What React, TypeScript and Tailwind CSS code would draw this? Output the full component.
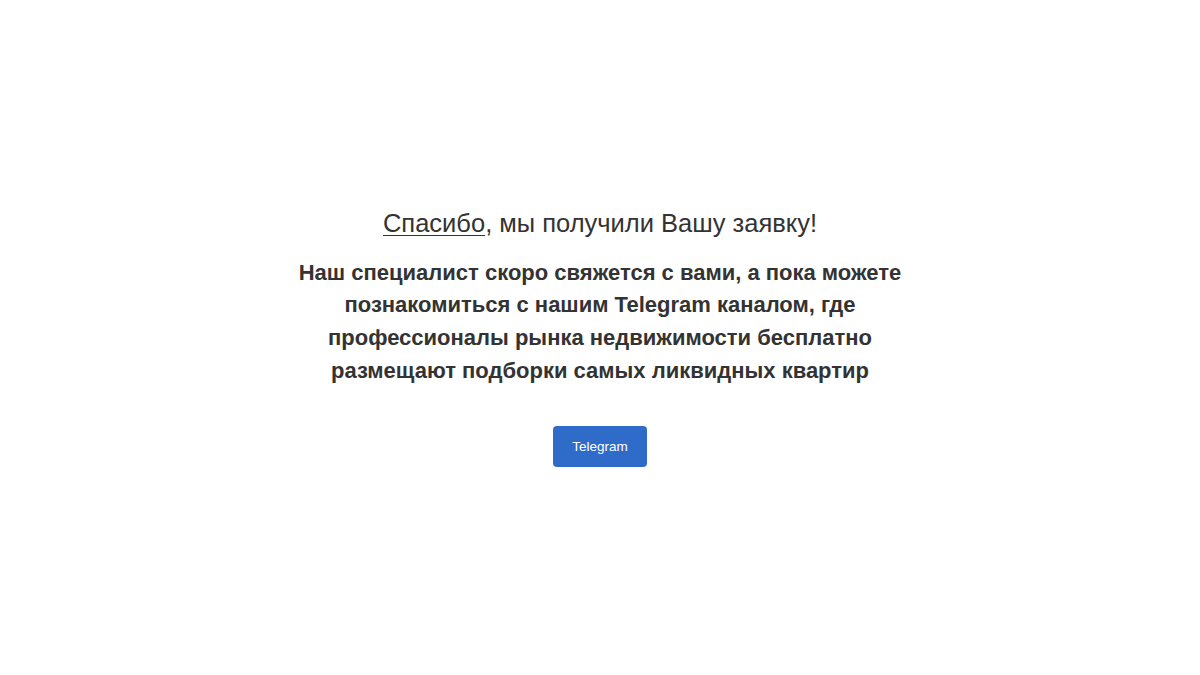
export default function App() {
  return (
    <div className="flex min-h-screen w-full flex-col items-center justify-center bg-white font-['Liberation_Sans',Arial,sans-serif] text-[#333333]">
      <h1 className="text-center text-[25.5px] font-normal leading-[31px]">
        <span className="underline decoration-1 underline-offset-[3px]">Спасибо</span>, мы получили Вашу заявку!
      </h1>
      <p className="mt-[18px] max-w-[610px] text-center text-[22px] font-bold leading-[32.6px]">
        Наш специалист скоро свяжется с вами, а пока можете познакомиться с нашим Telegram каналом, где
        профессионалы рынка недвижимости бесплатно размещают подборки самых ликвидных квартир
      </p>
      <a
        href="#"
        className="mt-[39px] flex h-[41px] w-[94px] items-center justify-center rounded-[4px] bg-[#2f6bc8] text-[13.5px] text-white"
      >
        Telegram
      </a>
    </div>
  );
}
